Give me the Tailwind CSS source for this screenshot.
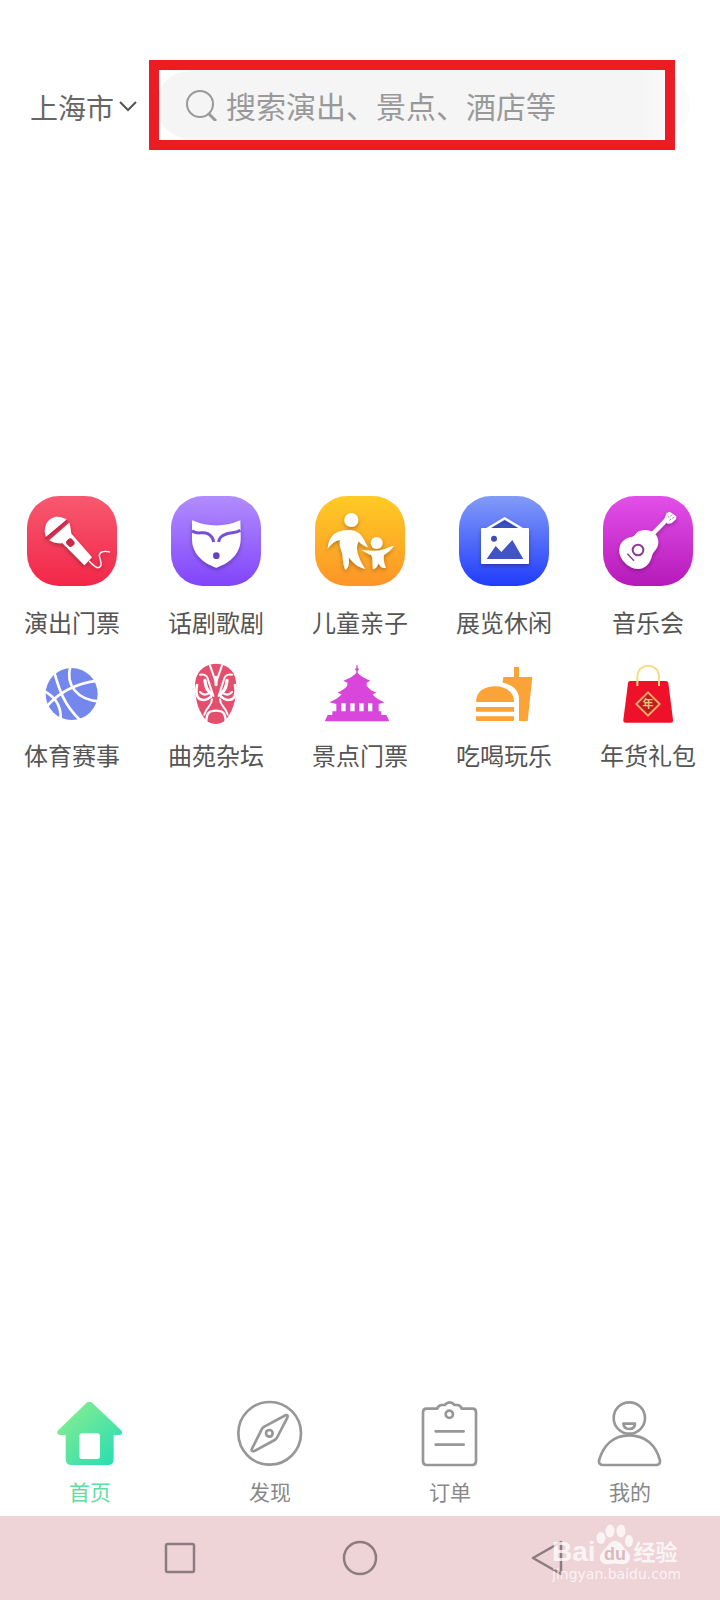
<!DOCTYPE html>
<html lang="zh-CN">
  <head>
    <meta charset="UTF-8" />
    <meta name="viewport" content="width=device-width, initial-scale=1.0" />
    <title>首页</title>
    <script src="https://cdn.jsdelivr.net/npm/@tailwindcss/browser@4"></script>
  </head>

  <body
    class="flex min-h-screen flex-col bg-white font-['Noto_Sans_CJK_SC',sans-serif] text-[#555]"
  >
    <!-- Header -->
    <header class="flex items-center px-[30px] pt-[71px]">
      <button class="flex w-[126px] shrink-0 items-center gap-1 pt-1 text-[28px] leading-9 text-[#666]">
        上海市
        <svg class="h-5 w-5" viewBox="0 0 20 20" fill="none" stroke="#555" stroke-width="2">
          <path d="M2 5 L10 13 L18 5" />
        </svg>
      </button>
      <form class="relative h-[68px] flex-1 rounded-full bg-linear-to-r from-[#f5f5f5] from-90% to-[#fcfcfc]">
        <label class="flex h-full items-center gap-2 pl-[30px]">
          <svg class="h-8 w-8 shrink-0" viewBox="0 0 32 32" fill="none" stroke="#999">
            <circle cx="14" cy="15" r="13" stroke-width="2" />
            <path d="M23 25 L30 32" stroke-width="3" />
          </svg>
          <input
            type="text"
            aria-label="搜索"
            placeholder="搜索演出、景点、酒店等"
            class="w-full bg-transparent text-[30px] leading-10 outline-none placeholder:text-[#999]"
          />
        </label>
        <div
          class="pointer-events-none absolute -top-[11px] right-[15px] -bottom-[11px] -left-[7px] border-[10px] border-[#ec1c24]"
        ></div>
      </form>
    </header>

    <!-- Categories -->
    <main class="mt-[357px] grid grid-cols-5 gap-y-[19px] text-[24px] leading-9">
      <a href="#" class="flex flex-col items-center gap-[18px]">
        <svg class="h-[90px] w-[90px]" viewBox="81 48 270 270">
          <defs>
            <linearGradient id="red" x2="0" y2="1">
              <stop stop-color="#f75970" />
              <stop offset="1" stop-color="#f32649" />
            </linearGradient>
            <filter id="shadow" x="-20%" y="-20%" width="140%" height="150%">
              <feDropShadow dx="0" dy="6" stdDeviation="6" flood-opacity="0.3" />
            </filter>
          </defs>
          <rect x="81" y="48" width="270" height="270" rx="96" fill="url(#red)" />
          <g filter="url(#shadow)">
            <path d="M138 172 C126 138 146 110 172 110 C184 110 193 114 200 119 Z" fill="#fff" />
            <path d="M148 181 L208 128 C212 140 212 150 214 161 L276 232 L253 256 L187 189 C174 192 160 188 148 181 Z" fill="#fff" />
            <path d="M137 176 L202 122" stroke="#c92b49" stroke-width="7" />
            <rect x="200" y="176" width="22" height="24" rx="9" transform="rotate(-42 211 188)" fill="#c92b49" />
            <path d="M267 243 C280 255 286 263 294 263 C310 262 301 240 298 229 C297 216 310 211 330 216" fill="none" stroke="#fff" stroke-width="4" />
          </g>
        </svg>
        演出门票
      </a>
      <a href="#" class="flex flex-col items-center gap-[18px]">
        <svg class="h-[90px] w-[90px]" viewBox="512 48 270 270">
          <defs>
            <linearGradient id="violet" x2="0" y2="1">
              <stop stop-color="#b18dfd" />
              <stop offset="1" stop-color="#8144fb" />
            </linearGradient>
          </defs>
          <rect x="512" y="48" width="270" height="270" rx="96" fill="url(#violet)" />
          <path d="M575 121 Q648 152 720 121 L721 175 C721 220 690 249 648 263 C606 249 575 220 575 175 Z" fill="#fff" filter="url(#shadow)" />
          <path d="M575 152 C590 166 606 153 622 161 C634 167 638 173 640 186 M720 151 C706 161 693 156 678 162 C662 167 657 173 655 186" fill="none" stroke="#7650d8" stroke-width="9" />
          <circle cx="648" cy="227" r="10" fill="#6544bd" />
        </svg>
        话剧歌剧
      </a>
      <a href="#" class="flex flex-col items-center gap-[18px]">
        <svg class="h-[90px] w-[90px]" viewBox="105 48 270 270">
          <defs>
            <linearGradient id="amber" x2="0" y2="1">
              <stop stop-color="#fecb25" />
              <stop offset="1" stop-color="#fd9427" />
            </linearGradient>
          </defs>
          <rect x="105" y="48" width="270" height="270" rx="96" fill="url(#amber)" />
          <g fill="#fff" filter="url(#shadow)">
            <circle cx="214" cy="120" r="21" />
            <path d="M143 206 C145 168 168 150 205 150 C243 150 250 176 264 202 C251 198 243 192 236 184 C229 198 230 209 235 226 C240 243 248 256 256 267 C234 263 219 249 206 232 C208 247 207 264 196 270 C187 251 190 229 184 212 C178 198 179 188 180 180 C163 183 154 192 143 206 Z" />
            <circle cx="290" cy="189" r="18" />
            <path d="M243 209 C262 211 278 213 290 212 C310 211 325 201 342 197 C334 211 322 218 312 225 C309 240 314 254 318 264 C305 266 300 259 296 250 C292 258 288 267 279 268 C276 255 280 240 274 226 C264 220 253 216 243 209 Z" />
          </g>
        </svg>
        儿童亲子
      </a>
      <a href="#" class="flex flex-col items-center gap-[18px]">
        <svg class="h-[90px] w-[90px]" viewBox="537 48 270 270">
          <defs>
            <linearGradient id="blue" x2="0" y2="1">
              <stop stop-color="#829bf8" />
              <stop offset="1" stop-color="#203cfb" />
            </linearGradient>
          </defs>
          <rect x="537" y="48" width="270" height="270" rx="96" fill="url(#blue)" />
          <path d="M634 144 L674 121 L714 144 Z" fill="#3c55c8" />
          <g filter="url(#shadow)">
            <path d="M622 146 L674 115 L726 146" fill="none" stroke="#fff" stroke-width="7" />
            <rect x="603" y="144" width="144" height="108" rx="3" fill="#fff" />
          </g>
          <circle cx="642" cy="176" r="9" fill="#3d4fae" />
          <path d="M620 237 L647 198 L664 216 L697 180 L730 237 Z" fill="#4054c8" />
        </svg>
        展览休闲
      </a>
      <a href="#" class="flex flex-col items-center gap-[18px]">
        <svg class="h-[90px] w-[90px]" viewBox="129 48 270 270">
          <defs>
            <linearGradient id="magenta" x2="0" y2="1">
              <stop stop-color="#e34fe9" />
              <stop offset="1" stop-color="#b51ab9" />
            </linearGradient>
          </defs>
          <rect x="129" y="48" width="270" height="270" rx="96" fill="url(#magenta)" />
          <g fill="#fff" filter="url(#shadow)">
            <path d="M178 207 C180 184 198 173 217 170 C226 168 226 157 240 153 C255 147 276 151 286 163 C298 177 297 196 288 208 C281 217 276 223 274 234 C267 255 252 267 234 267 C207 266 174 237 178 207 Z" />
            <path d="M272 168 L322 116" stroke="#fff" stroke-width="13" />
            <path d="M313 117 L320 99 L329 95 L349 109 L348 118 L334 130 L323 131 Z" />
          </g>
          <circle cx="234" cy="210" r="16" fill="none" stroke="#8b3b92" stroke-width="6" />
          <path d="M202 221 L222 242" stroke="#8b3b92" stroke-width="4" />
          <path d="M323 108 L328 113 M336 104 L331 109 M328 121 L333 117 M342 112 L337 115" stroke="#c964cc" stroke-width="3" />
        </svg>
        音乐会
      </a>

      <a href="#" class="flex flex-col items-center gap-2">
        <svg class="h-[70px] w-[70px]" viewBox="111 27 210 210">
          <circle cx="215" cy="132" r="78" fill="#7487ed" />
          <path d="M163 68 C178 120 192 165 240 210 M130 122 C160 138 184 160 182 208 M138 172 C170 134 220 101 294 92 M211 50 C196 104 232 152 300 154" fill="none" stroke="#fff" stroke-width="8" />
        </svg>
        体育赛事
      </a>
      <a href="#" class="flex flex-col items-center gap-2">
        <svg class="h-[70px] w-[70px]" viewBox="543 27 210 210">
          <path d="M648 41 C684 42 709 66 709 107 C709 152 697 190 672 214 C657 225 638 225 622 214 C597 190 585 152 585 107 C585 66 612 42 648 41 Z" fill="#e34f6d" />
          <g fill="none" stroke="#fff" stroke-linejoin="round" stroke-linecap="round">
            <path d="M630 46 L648 98 L666 46" stroke-width="6" />
            <path d="M648 82 V104" stroke-width="9" />
            <path d="M600 74 C618 70 624 82 627 98 L640 138 M696 74 C678 70 672 82 669 98 L656 138" stroke-width="6" />
            <path d="M615 91 C617 110 620 121 635 133 M681 91 C679 110 676 121 661 133" stroke-width="10" />
            <path d="M591 105 C585 137 594 151 613 150 C622 149 628 145 633 140 M705 105 C711 137 702 151 683 150 C674 149 668 145 663 140" stroke-width="8" />
            <path d="M600 126 C610 137 620 134 626 130 M696 126 C686 137 676 134 670 130" stroke-width="6" />
            <path d="M636 148 C636 169 618 170 613 194 M660 148 C660 169 678 170 683 194" stroke-width="6" />
            <path d="M619 213 C620 189 627 182 648 182 C669 182 676 189 677 213" stroke-width="7" />
          </g>
        </svg>
        曲苑杂坛
      </a>
      <a href="#" class="flex flex-col items-center gap-2">
        <svg class="h-[70px] w-[70px]" viewBox="135 27 210 210" fill="#d946dc">
          <circle cx="231" cy="58" r="5" />
          <path d="M229 46 H233 V72 H229 Z" />
          <path d="M231 67 C242 80 255 86 271 92 L260 98 V107 C268 119 279 124 290 128 L278 133 C286 145 299 151 314 157 L296 162 V184 H304 V195 H319 L328 214 H134 L143 195 H157 V184 H169 V162 L148 157 C164 151 177 143 185 133 L172 128 C187 122 197 115 202 106 V98 L190 92 C207 86 220 80 231 67 Z" />
          <path d="M184 160 H197 V184 H184 Z M211 160 H224 V184 H211 Z M238 160 H251 V184 H238 Z M264 160 H277 V184 H264 Z" fill="#fff" />
        </svg>
        景点门票
      </a>
      <a href="#" class="flex flex-col items-center gap-2">
        <svg class="h-[70px] w-[70px]" viewBox="567 27 210 210" fill="#fba337">
          <path d="M588 156 C588 124 614 109 645 109 C677 109 702 126 702 156 Z" />
          <path d="M588 171 H702 V185 H588 Z M588 199 H702 V209 Q702 213 698 213 H592 Q588 213 588 209 Z" />
          <path d="M702 51 H717 V81 H757 L743 213 H717 V145 C716 119 696 104 668 98 L670 81 H702 Z" />
        </svg>
        吃喝玩乐
      </a>
      <a href="#" class="flex flex-col items-center gap-2">
        <svg class="h-[70px] w-[70px]" viewBox="159 27 210 210">
          <path d="M210 93 H318 Q324 93 325 99 L339 210 Q340 218 332 218 H197 Q189 218 190 210 L204 99 Q205 93 210 93 Z" fill="#ee1129" />
          <path d="M232 108 V80 C232 36 297 36 297 80 V108" fill="none" stroke="#f6dc83" stroke-width="6" />
          <path d="M264 127 L299 162 L264 197 L229 162 Z" fill="#bd1c20" stroke="#f2a765" stroke-width="6" />
          <text x="264" y="174" text-anchor="middle" font-size="33" font-weight="700" fill="#ffc27b">年</text>
        </svg>
        年货礼包
      </a>
    </main>

    <!-- Tab bar -->
    <nav class="mt-auto grid grid-cols-4 pb-[9px] text-[21px] leading-8 text-[#888]">
      <a href="#" class="flex flex-col items-center gap-[6px] text-[#5fdda2]">
        <svg class="h-[70px] w-[70px]" viewBox="165 57 210 210">
          <defs>
            <linearGradient id="green" x2="1" y2="1">
              <stop offset="0.150" stop-color="#82ec92" />
              <stop offset="1" stop-color="#20dcb5" />
            </linearGradient>
          </defs>
          <path d="M259 69 Q268 62 277 69 L365 152 Q370 164 356 165 H341 V237 Q341 255 323 255 H215 Q197 255 197 237 V165 H182 Q168 164 173 152 Z" fill="url(#green)" />
          <rect x="238" y="160" width="62" height="77" rx="9" fill="#fff" />
        </svg>
        首页
      </a>
      <a href="#" class="flex flex-col items-center gap-[6px]">
        <svg class="h-[70px] w-[70px]" viewBox="705 57 210 210" fill="none" stroke="#979797" stroke-width="8" stroke-linejoin="round">
          <circle cx="809" cy="160" r="94" />
          <path d="M858 105 L793 140 Q788 143 785 148 L755 208 Q754 216 763 213 L824 180 Q829 177 832 171 L862 113 Q865 104 858 105 Z" />
          <circle cx="808" cy="160" r="10" />
        </svg>
        发现
      </a>
      <a href="#" class="flex flex-col items-center gap-[6px]">
        <svg class="h-[70px] w-[70px]" viewBox="165 57 210 210" fill="none" stroke="#979797" stroke-width="8" stroke-linejoin="round">
          <path d="M232 86 H200 Q189 86 189 97 V244 Q189 255 200 255 H337 Q348 255 348 244 V97 Q348 86 337 86 H305 Q302 75 291 75 H284 Q277 67 269 67 Q261 67 254 75 H246 Q235 75 232 86 Z" />
          <circle cx="268" cy="103" r="11" />
          <path d="M227 154 H311 M227 194 H311" stroke-linecap="round" />
        </svg>
        订单
      </a>
      <a href="#" class="flex flex-col items-center gap-[6px]">
        <svg class="h-[70px] w-[70px]" viewBox="705 57 210 210" fill="none" stroke="#979797" stroke-width="8" stroke-linejoin="round">
          <circle cx="808" cy="114" r="47" />
          <path d="M790 131 H825 Q824 147 808 147 Q792 147 790 131 Z" />
          <path d="M808 166 C857 166 888 196 900 241 Q901 255 888 255 H729 Q716 255 717 241 C730 196 760 166 808 166 Z" />
        </svg>
        我的
      </a>
    </nav>

    <!-- System bar -->
    <footer class="relative grid h-[84px] grid-cols-[1fr_2fr_2fr_2fr_1fr] items-center bg-[#eed3d7]">
      <button aria-label="最近任务" class="col-start-2 flex justify-center">
        <svg class="h-9 w-9" viewBox="0 0 36 36" fill="none" stroke="#8b7c7f" stroke-width="2.500">
          <rect x="4" y="4" width="28" height="28" rx="1.500" />
        </svg>
      </button>
      <button aria-label="主屏幕" class="flex justify-center">
        <svg class="h-9 w-9" viewBox="0 0 36 36" fill="none" stroke="#8b7c7f" stroke-width="2.500">
          <circle cx="18" cy="18" r="16" />
        </svg>
      </button>
      <button aria-label="返回" class="flex justify-center">
        <svg class="h-9 w-12" viewBox="0 0 48 36" fill="none" stroke="#8b7c7f" stroke-width="2.500" stroke-linejoin="round">
          <path d="M17 18 L45 2 V34 Z" />
        </svg>
      </button>

      <!-- Watermark -->
      <div class="pointer-events-none absolute top-1 right-[40px] w-[128px] text-white/75">
        <div class="flex h-[46px] items-end whitespace-nowrap">
          <span class="font-['Liberation_Sans',sans-serif] text-[28px] leading-7 font-bold">Bai</span>
          <svg class="h-[42px] w-[38px] shrink-0" viewBox="0 0 38 42" fill="currentColor">
            <ellipse cx="5" cy="14" rx="4.500" ry="6" />
            <ellipse cx="14" cy="7" rx="4.500" ry="6.500" />
            <ellipse cx="25" cy="7" rx="4.500" ry="6.500" />
            <ellipse cx="33" cy="17" rx="4" ry="6" />
            <path d="M19 17 C26 17 27 24 31 27 C38 34 32 42 24 40 Q19 39 14 40 C4 42 1 33 7 27 C11 24 13 17 19 17 Z" />
            <text x="19" y="36" text-anchor="middle" font-family="Liberation Sans, sans-serif" font-size="18" font-weight="700" fill="#dcb9bf">du</text>
          </svg>
          <span class="text-[22px] leading-8 font-bold">经验</span>
        </div>
        <div class="font-['DejaVu_Sans',sans-serif] text-[14px] leading-4">jingyan.baidu.com</div>
      </div>
    </footer>
  </body>
</html>
